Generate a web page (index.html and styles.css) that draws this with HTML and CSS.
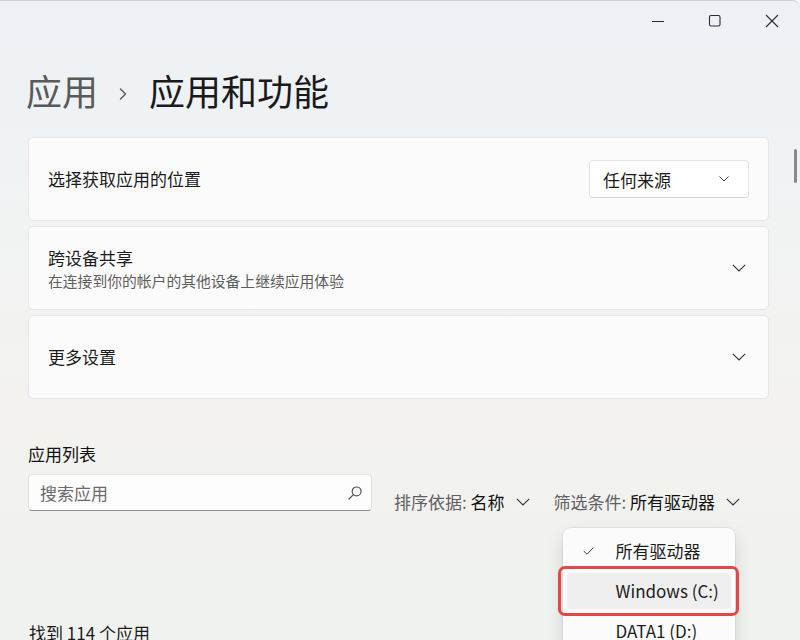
FILE: index.html
```html
<!DOCTYPE html>
<html lang="zh-CN">
<head>
<meta charset="utf-8">
<title>应用和功能</title>
<link rel="stylesheet" href="styles.css">
</head>
<body>
<div class="window">
  <div class="titlebar">
    <button class="ctl" aria-label="最小化">
      <svg width="14" height="14" viewBox="0 0 14 14"><path d="M1 7.5H13" stroke="#2b2b2b" stroke-width="1.1" fill="none"/></svg>
    </button>
    <button class="ctl" aria-label="最大化">
      <svg width="14" height="14" viewBox="0 0 14 14"><rect x="1.5" y="1.5" width="10.5" height="10.5" rx="1.5" stroke="#2b2b2b" stroke-width="1.1" fill="none"/></svg>
    </button>
    <button class="ctl" aria-label="关闭">
      <svg width="14" height="14" viewBox="0 0 14 14"><path d="M1 1L13 13M13 1L1 13" stroke="#2b2b2b" stroke-width="1.1" fill="none"/></svg>
    </button>
  </div>
  <div class="scrollbar"></div>

  <main class="content">
    <h1 class="crumbs">
      <span class="crumb-parent">应用</span>
      <svg class="crumb-sep" width="8" height="12" viewBox="0 0 8 12"><path d="M1.5 1L6.5 6L1.5 11" stroke="#555" stroke-width="1.4" fill="none" stroke-linecap="round" stroke-linejoin="round"/></svg>
      <span class="crumb-current">应用和功能</span>
    </h1>

    <section class="cards">
      <div class="card">
        <div class="card-text">
          <div class="card-title">选择获取应用的位置</div>
        </div>
        <div class="select">
          <span>任何来源</span>
          <svg width="10" height="6" viewBox="0 0 10 6"><path d="M0.5 0.5L5 5L9.5 0.5" stroke="#444" stroke-width="1" fill="none"/></svg>
        </div>
      </div>
      <div class="card">
        <div class="card-text">
          <div class="card-title">跨设备共享</div>
          <div class="card-sub">在连接到你的帐户的其他设备上继续应用体验</div>
        </div>
        <svg class="expand" width="14" height="8" viewBox="0 0 14 8"><path d="M0.8 0.8L7 7L13.2 0.8" stroke="#333" stroke-width="1.1" fill="none"/></svg>
      </div>
      <div class="card">
        <div class="card-text">
          <div class="card-title">更多设置</div>
        </div>
        <svg class="expand" width="14" height="8" viewBox="0 0 14 8"><path d="M0.8 0.8L7 7L13.2 0.8" stroke="#333" stroke-width="1.1" fill="none"/></svg>
      </div>
    </section>

    <h2 class="section-title">应用列表</h2>

    <div class="toolbar">
      <div class="search">
        <span class="placeholder">搜索应用</span>
        <svg width="14" height="14" viewBox="0 0 14 14"><circle cx="8.6" cy="5.4" r="4.4" stroke="#555" stroke-width="1.2" fill="none"/><path d="M5.4 8.6L1 13" stroke="#555" stroke-width="1.3" stroke-linecap="round" fill="none"/></svg>
      </div>
      <div class="sort">
        <span class="lbl">排序依据:</span>&nbsp;<span class="val">名称</span>
        <svg class="drop" width="14" height="8" viewBox="0 0 14 8"><path d="M0.8 0.8L7 7L13.2 0.8" stroke="#333" stroke-width="1.1" fill="none"/></svg>
      </div>
      <div class="sort filter">
        <span class="lbl">筛选条件:</span>&nbsp;<span class="val">所有驱动器</span>
        <svg class="drop" width="14" height="8" viewBox="0 0 14 8"><path d="M0.8 0.8L7 7L13.2 0.8" stroke="#333" stroke-width="1.1" fill="none"/></svg>

        <div class="menu">
          <div class="menu-item">
            <span class="check"><svg width="11" height="8" viewBox="0 0 11 8"><path d="M0.7 4L4 7.2L10.3 0.8" stroke="#444" stroke-width="1" fill="none"/></svg></span>
            <span>所有驱动器</span>
          </div>
          <div class="menu-item hover">
            <span class="check"></span>
            <span>Windows (C:)</span>
          </div>
          <div class="menu-item">
            <span class="check"></span>
            <span>DATA1 (D:)</span>
          </div>
        </div>
        <div class="ring"></div>
      </div>
    </div>

    <div class="count">找到 114 个应用</div>
  </main>
</div>
</body>
</html>
```

FILE: styles.css
```css
* { box-sizing: border-box; }

html, body {
  margin: 0;
  padding: 0;
  width: 800px;
  height: 640px;
  overflow: hidden;
  background: #f7f7f7;
}

body {
  font-family: "Noto Sans CJK SC", "Noto Sans", sans-serif;
  color: #1b1b1b;
}

.window {
  position: relative;
  width: 800px;
  height: 640px;
  border-top: 1px solid #cdd1d5;
  border-top-right-radius: 8px;
  background: linear-gradient(180deg, #edf1f5 0%, #f1f3f3 35%, #f3f2ef 65%, #eff2ef 100%);
  overflow: hidden;
}

.titlebar {
  display: flex;
  justify-content: flex-end;
  height: 39px;
}

.ctl {
  width: 57px;
  height: 39px;
  border: 0;
  padding: 0;
  background: transparent;
  display: flex;
  align-items: center;
  justify-content: center;
}

.scrollbar {
  position: absolute;
  left: 794px;
  top: 148px;
  width: 3px;
  height: 34px;
  border-radius: 2px;
  background: #8a8a8a;
}

.content {
  padding: 0 31px 0 28px;
}

.crumbs {
  display: flex;
  align-items: center;
  margin: 28px 0 0 -2px;
  font-size: 36px;
  line-height: 44px;
  font-weight: 400;
}

.crumb-parent { color: #5a5a5a; }
.crumb-current { color: #1a1a1a; }

.crumb-sep {
  margin: 7px 22px 0 21px;
}

.cards {
  display: flex;
  flex-direction: column;
  gap: 5px;
  margin-top: 25px;
}

.card {
  display: flex;
  align-items: center;
  height: 84px;
  padding: 0 19px 0 19px;
  background: #fbfbfb;
  border: 1px solid #e6e6e6;
  border-radius: 5px;
}

.card-text {
  display: flex;
  flex-direction: column;
}

.card-title {
  font-size: 17px;
  line-height: 24px;
  color: #1b1b1b;
}

.card-sub {
  font-size: 14.8px;
  line-height: 21px;
  color: #5e5e5e;
}

.select {
  margin-left: auto;
  width: 160px;
  height: 38px;
  display: flex;
  align-items: center;
  justify-content: space-between;
  padding: 0 19px 0 13px;
  background: #ffffff;
  border: 1px solid #e4e4e4;
  border-bottom-color: #d6d6d6;
  border-radius: 4px;
  font-size: 17px;
  color: #1b1b1b;
}

.expand {
  margin-left: auto;
  margin-right: 3px;
}

.section-title {
  margin: 43px 0 0 0;
  font-size: 17px;
  line-height: 24px;
  font-weight: 400;
  color: #111111;
}

.toolbar {
  display: flex;
  align-items: flex-start;
  margin-top: 8px;
}

.search {
  width: 344px;
  height: 37px;
  display: flex;
  align-items: center;
  justify-content: space-between;
  padding: 0 9px 0 11px;
  background: #fdfdfd;
  border: 1px solid #e3e3e3;
  border-bottom: 1px solid #8f8f8f;
  border-radius: 4px;
}

.placeholder {
  font-size: 17px;
  color: #6a6a6a;
}

.sort {
  display: flex;
  align-items: center;
  margin: 16px 0 0 22px;
  font-size: 17px;
  line-height: 24px;
}

.sort .lbl { color: #5f5f5f; }
.sort .val { color: #111111; font-weight: 400; }

.drop {
  margin-left: 11px;
}

.filter {
  position: relative;
  margin-left: 24px;
}

.menu {
  position: absolute;
  left: 9px;
  top: 38px;
  width: 172px;
  padding: 5px 4px;
  background: #fbfbfb;
  border-radius: 8px;
  box-shadow: 0 0 0 1px rgba(0, 0, 0, 0.05), 0 8px 18px rgba(0, 0, 0, 0.13);
  display: flex;
  flex-direction: column;
  gap: 4px;
}

.menu-item {
  display: flex;
  align-items: center;
  height: 36px;
  padding-left: 16px;
  border-radius: 4px;
  font-size: 17px;
  color: #1b1b1b;
  white-space: nowrap;
}

.menu-item.hover {
  background: #efefef;
}

.check {
  display: flex;
  align-items: center;
  width: 33px;
}

.ring {
  position: absolute;
  left: 4px;
  top: 76px;
  width: 181px;
  height: 50px;
  border: 3px solid #e24848;
  border-radius: 7px;
}

.count {
  margin-top: 107px;
  padding-left: 1px;
  font-size: 17px;
  line-height: 24px;
  color: #1b1b1b;
}
```
